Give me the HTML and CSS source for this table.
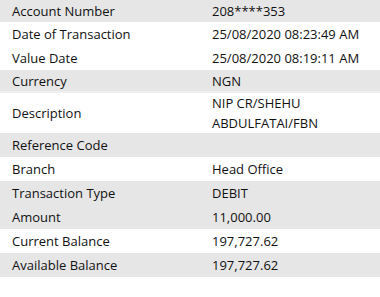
FILE: index.html
```html
<!DOCTYPE html>
<html>
<head>
<meta charset="utf-8">
<link rel="stylesheet" href="styles.css">
</head>
<body>
<div class="table">
  <div class="row shade h22"><div class="k">Account Number</div><div class="v">208****353</div></div>
  <div class="row"><div class="k">Date of Transaction</div><div class="v">25/08/2020 08:23:49 AM</div></div>
  <div class="row"><div class="k">Value Date</div><div class="v">25/08/2020 08:19:11 AM</div></div>
  <div class="row shade sep h23"><div class="k">Currency</div><div class="v">NGN</div></div>
  <div class="row tall"><div class="k">Description</div><div class="v">NIP CR/SHEHU<br>ABDULFATAI/FBN</div></div>
  <div class="row shade"><div class="k">Reference Code</div><div class="v"></div></div>
  <div class="row"><div class="k">Branch</div><div class="v">Head Office</div></div>
  <div class="row shade"><div class="k">Transaction Type</div><div class="v">DEBIT</div></div>
  <div class="row shade"><div class="k">Amount</div><div class="v">11,000.00</div></div>
  <div class="row"><div class="k">Current Balance</div><div class="v">197,727.62</div></div>
  <div class="row shade"><div class="k">Available Balance</div><div class="v">197,727.62</div></div>
</div>
</body>
</html>
```
FILE: styles.css
```css
html, body {
  margin: 0;
  padding: 0;
  background: #fff;
}
body {
  font-family: "Open Sans", "Noto Sans", sans-serif;
  font-size: 13px;
  color: #111;
}
.table {
  display: flex;
  flex-direction: column;
  width: 380px;
}
.row {
  display: grid;
  grid-template-columns: 200px 1fr;
  align-items: center;
  height: 24px;
  box-sizing: border-box;
}
.row.h22 { height: 22px; }
.row.h23 { height: 23px; }
.row.tall { height: 40px; line-height: 20px; }
.shade { background: #e6e6e6; }
.sep { border-bottom: 2px solid #efefef; }
.k { padding-left: 12px; }
.v { padding-left: 12px; }
```
